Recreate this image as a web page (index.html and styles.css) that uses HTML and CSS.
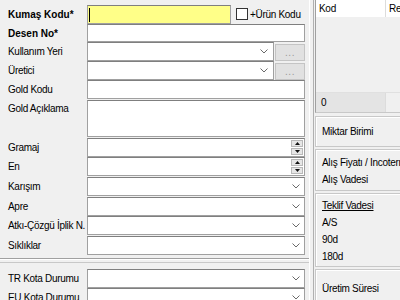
FILE: index.html
```html
<!doctype html>
<html>
    <head>
        <meta charset="utf-8" />
        <title>Kumaş Kartı</title>
        <link rel="stylesheet" href="styles.css">
    </head>
    <body>
        <div class="window">
            <div class="left">
                <div class="group group-main">
                    <div class="form">
                        <div class="lbl bold">Kumaş Kodu*</div>
                        <div class="ctl">
                            <div class="field code-field"><span class="caret"></span></div>
                            <span class="check"></span>
                            <span class="check-label">+Ürün Kodu</span>
                        </div>

                        <div class="lbl bold">Desen No*</div>
                        <div class="ctl"><div class="field slim"></div></div>

                        <div class="lbl">Kullanım Yeri</div>
                        <div class="ctl">
                            <div class="field combo narrow">
                                <svg class="chev" width="8" height="5" viewBox="0 0 8 5"><path d="M0.5 0.5 L4 4 L7.5 0.5" /></svg>
                            </div>
                            <button class="dots">...</button>
                        </div>

                        <div class="lbl">Üretici</div>
                        <div class="ctl">
                            <div class="field combo narrow">
                                <svg class="chev" width="8" height="5" viewBox="0 0 8 5"><path d="M0.5 0.5 L4 4 L7.5 0.5" /></svg>
                            </div>
                            <button class="dots">...</button>
                        </div>

                        <div class="lbl">Gold Kodu</div>
                        <div class="ctl"><div class="field"></div></div>

                        <div class="lbl top">Gold Açıklama</div>
                        <div class="ctl"><div class="field memo"></div></div>

                        <div class="lbl">Gramaj</div>
                        <div class="ctl">
                            <div class="field spin">
                                <span class="spin-btns">
                                    <span class="spin-btn"><svg width="5" height="3" viewBox="0 0 5 3"><path d="M2.5 0 L5 3 L0 3 Z" /></svg></span>
                                    <span class="spin-btn"><svg width="5" height="3" viewBox="0 0 5 3"><path d="M0 0 L5 0 L2.5 3 Z" /></svg></span>
                                </span>
                            </div>
                        </div>

                        <div class="lbl">En</div>
                        <div class="ctl">
                            <div class="field spin">
                                <span class="spin-btns">
                                    <span class="spin-btn"><svg width="5" height="3" viewBox="0 0 5 3"><path d="M2.5 0 L5 3 L0 3 Z" /></svg></span>
                                    <span class="spin-btn"><svg width="5" height="3" viewBox="0 0 5 3"><path d="M0 0 L5 0 L2.5 3 Z" /></svg></span>
                                </span>
                            </div>
                        </div>

                        <div class="lbl">Karışım</div>
                        <div class="ctl">
                            <div class="field combo">
                                <svg class="chev" width="8" height="5" viewBox="0 0 8 5"><path d="M0.5 0.5 L4 4 L7.5 0.5" /></svg>
                            </div>
                        </div>

                        <div class="lbl">Apre</div>
                        <div class="ctl">
                            <div class="field combo">
                                <svg class="chev" width="8" height="5" viewBox="0 0 8 5"><path d="M0.5 0.5 L4 4 L7.5 0.5" /></svg>
                            </div>
                        </div>

                        <div class="lbl">Atkı-Çözgü İplik N.</div>
                        <div class="ctl">
                            <div class="field combo">
                                <svg class="chev" width="8" height="5" viewBox="0 0 8 5"><path d="M0.5 0.5 L4 4 L7.5 0.5" /></svg>
                            </div>
                        </div>

                        <div class="lbl">Sıklıklar</div>
                        <div class="ctl">
                            <div class="field combo">
                                <svg class="chev" width="8" height="5" viewBox="0 0 8 5"><path d="M0.5 0.5 L4 4 L7.5 0.5" /></svg>
                            </div>
                        </div>
                    </div>
                </div>

                <div class="group group-quota">
                    <div class="form quota-form">
                        <div class="lbl">TR Kota Durumu</div>
                        <div class="ctl">
                            <div class="field combo">
                                <svg class="chev" width="8" height="5" viewBox="0 0 8 5"><path d="M0.5 0.5 L4 4 L7.5 0.5" /></svg>
                            </div>
                        </div>

                        <div class="lbl">EU Kota Durumu</div>
                        <div class="ctl">
                            <div class="field combo">
                                <svg class="chev" width="8" height="5" viewBox="0 0 8 5"><path d="M0.5 0.5 L4 4 L7.5 0.5" /></svg>
                            </div>
                        </div>
                    </div>
                </div>
            </div>

            <div class="right">
                <div class="grid">
                    <div class="grid-head">
                        <div class="cell cell-kod">Kod</div>
                        <div class="cell">Renk</div>
                    </div>
                    <div class="grid-body"></div>
                    <div class="grid-foot">
                        <div class="cell cell-kod total">0</div>
                        <div class="cell"></div>
                    </div>
                </div>

                <div class="box box-unit">
                    <div class="line">Miktar Birimi</div>
                </div>

                <div class="box box-price">
                    <div class="line">Alış Fiyatı / Incoterms</div>
                    <div class="line">Alış Vadesi</div>
                </div>

                <div class="box box-terms">
                    <div class="line underline">Teklif Vadesi</div>
                    <div class="line">A/S</div>
                    <div class="line">90d</div>
                    <div class="line">180d</div>
                </div>

                <div class="box box-time">
                    <div class="line">Üretim Süresi</div>
                    <div class="line">Sevk Süresi</div>
                </div>
            </div>
        </div>
    </body>
</html>
```

FILE: styles.css
```css
body {
    margin: 0;
    width: 400px;
    height: 300px;
    overflow: hidden;
    background-color: #f0f0f0;
    font-family: "Liberation Sans", Arial, sans-serif;
    font-size: 10px;
    letter-spacing: -0.3px;
    color: #000;
}

.window {
    display: flex;
    width: 560px;
    height: 300px;
}

/* Left side: form fields */
.left {
    width: 309px;
    border-right: 1px solid #fff;
    flex-shrink: 0;
}

.group-main {
    padding-top: 5px;
    padding-bottom: 3px;
    border-bottom: 1px solid #a0a0a0;
    box-shadow: 0 1px 0 #fff;
}

.group-quota {
    margin-top: 3px;
    padding-top: 6px;
    border-top: 1px solid #c8c8c8;
}

.form {
    display: grid;
    grid-template-columns: 79px 218px;
    grid-template-rows: 19px 18px 19px 19px 20px 38px 19px 20px 20px 19px 20px 19px;
    padding-left: 8px;
}

.quota-form {
    grid-template-rows: 19px 19px;
}

.lbl {
    display: flex;
    align-items: center;
    height: 19px;
    white-space: nowrap;
}

.lbl.bold {
    font-weight: bold;
    letter-spacing: 0;
}

.lbl.top {
    align-items: flex-start;
    padding-top: 3px;
    height: auto;
}

.ctl {
    display: flex;
    align-items: flex-start;
}

.field {
    box-sizing: border-box;
    width: 218px;
    height: 19px;
    background: #fff;
    border: 1px solid #a0a0a0;
    border-top-color: #7f7f7f;
    display: flex;
    align-items: center;
}

.field.slim {
    height: 18px;
}

.field.memo {
    height: 37px;
}

.code-field {
    width: 144px;
    background: #ffff88;
}

.caret {
    width: 1px;
    height: 14px;
    margin-left: 1px;
    background: #000;
}

.check {
    box-sizing: border-box;
    width: 12px;
    height: 12px;
    margin: 3px 0 0 5px;
    background: #fff;
    border: 1px solid #333;
}

.check-label {
    margin: 4px 0 0 2px;
    white-space: nowrap;
}

.combo {
    justify-content: flex-end;
    padding-right: 4px;
}

.combo.narrow {
    width: 187px;
    padding-right: 5px;
}

.chev path {
    fill: none;
    stroke: #6a6a6a;
    stroke-width: 1;
}

.dots {
    box-sizing: border-box;
    width: 30px;
    height: 17px;
    margin: 2px 0 0 1px;
    padding: 0;
    background: #e1e1e1;
    border: 1px solid #c4c4c4;
    color: #9a9a9a;
    font-family: "Liberation Sans", Arial, sans-serif;
    font-size: 10px;
    line-height: 15px;
    letter-spacing: 0.5px;
}

.spin {
    justify-content: flex-end;
    padding-right: 1px;
}

.spin-btns {
    display: flex;
    flex-direction: column;
    gap: 1px;
}

.spin-btn {
    box-sizing: border-box;
    width: 12px;
    height: 7px;
    background: #e6e6e6;
    border: 1px solid #b8b8b8;
    display: flex;
    align-items: center;
    justify-content: center;
}

.spin-btn path {
    fill: #111;
}

/* Right side: color grid and info boxes */
.right {
    width: 240px;
    margin-left: 3px;
    padding-left: 1px;
    border-left: 1px solid #b0b0b0;
}

.grid {
    border-left: 1px solid #a0a0a0;
    border-bottom: 1px solid #c8c8c8;
}

.grid-head {
    display: flex;
    height: 17px;
    background: #fff;
}

.cell {
    display: flex;
    align-items: center;
    padding-left: 3px;
}

.cell-kod {
    box-sizing: border-box;
    width: 70px;
    border-right: 1px solid #dcdcdc;
}

.grid-body {
    height: 75px;
    background: #f0f0f0;
}

.grid-foot {
    display: flex;
    height: 19px;
    border-top: 1px solid #e0e0e0;
    background: #f0f0f0;
}

.total {
    background: #e4e4e4;
    padding-left: 5px;
}

.box {
    box-sizing: border-box;
    border: 1px solid #c8c8c8;
    border-right: none;
    box-shadow: inset 1px 1px 0 #fff;
    padding-left: 6px;
}

.line {
    height: 17px;
    line-height: 17px;
    white-space: nowrap;
}

.box-unit {
    margin-top: 3px;
    height: 31px;
    padding-top: 6px;
}

.box-price {
    margin-top: 2px;
    height: 42px;
    padding-top: 4px;
}

.box-terms {
    margin-top: 2px;
    height: 74px;
    padding-top: 3px;
}

.underline {
    text-decoration: underline;
}

.box-time {
    margin-top: 2px;
    height: 60px;
    padding-top: 10px;
}
```
